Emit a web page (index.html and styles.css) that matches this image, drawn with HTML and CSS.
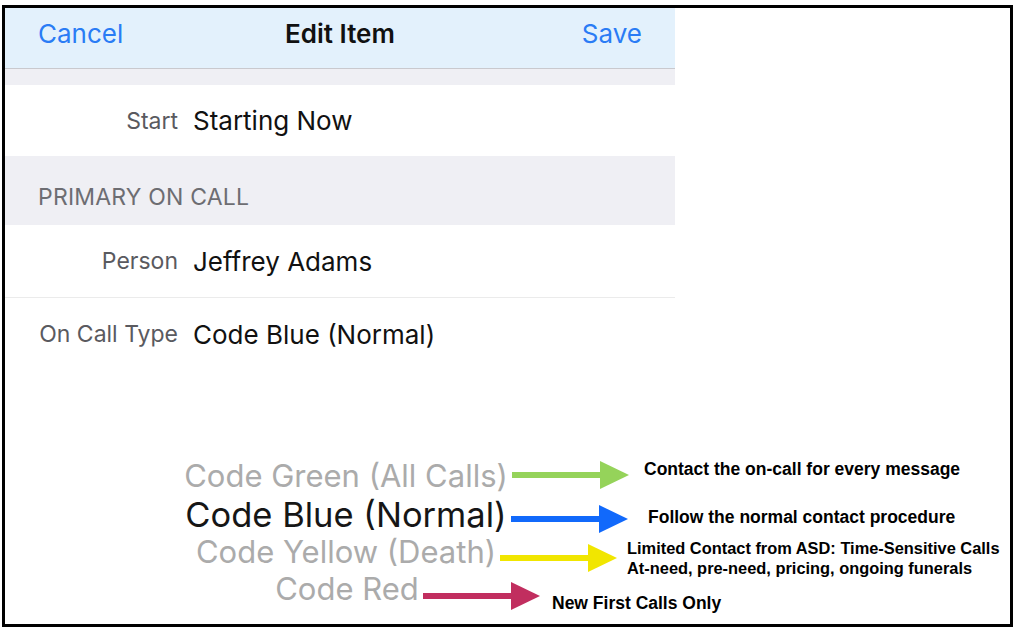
FILE: index.html
```html
<!DOCTYPE html>
<html>
<head>
<meta charset="utf-8">
<link rel="stylesheet" href="styles.css">
</head>
<body>
<div class="frame">
  <div class="phone">
    <div class="nav">
      <span class="nav-btn nav-left">Cancel</span>
      <span class="nav-title">Edit Item</span>
      <span class="nav-btn nav-right">Save</span>
    </div>
    <div class="band"></div>
    <div class="row row-start">
      <span class="label">Start</span>
      <span class="value">Starting Now</span>
    </div>
    <div class="section">PRIMARY ON CALL</div>
    <div class="row row-sep">
      <span class="label">Person</span>
      <span class="value">Jeffrey Adams</span>
    </div>
    <div class="row">
      <span class="label">On Call Type</span>
      <span class="value">Code Blue (Normal)</span>
    </div>
  </div>

  <div class="legend">
    <div class="lrow lrow-green">
      <span class="pick pick-green">Code Green (All Calls)</span>
      <svg class="arrow arrow-green" width="117" height="28" viewBox="0 0 117 28"><rect x="0" y="11" width="90" height="6"/><polygon points="88,0 117,14 88,28"/></svg>
      <span class="desc desc-green">Contact the on-call for every message</span>
    </div>
    <div class="lrow lrow-blue">
      <span class="pick pick-blue">Code Blue (Normal)</span>
      <svg class="arrow arrow-blue" width="117" height="28" viewBox="0 0 117 28"><rect x="0" y="11" width="90" height="6"/><polygon points="88,0 117,14 88,28"/></svg>
      <span class="desc desc-blue">Follow the normal contact procedure</span>
    </div>
    <div class="lrow lrow-yellow">
      <span class="pick pick-yellow">Code Yellow (Death)</span>
      <svg class="arrow arrow-yellow" width="117" height="28" viewBox="0 0 117 28"><rect x="0" y="11" width="90" height="6"/><polygon points="88,0 117,14 88,28"/></svg>
      <span class="desc desc-yellow">Limited Contact from ASD: Time-Sensitive Calls<br>At-need, pre-need, pricing, ongoing funerals</span>
    </div>
    <div class="lrow lrow-red">
      <span class="pick pick-red">Code Red</span>
      <svg class="arrow arrow-red" width="117" height="28" viewBox="0 0 117 28"><rect x="0" y="11" width="90" height="6"/><polygon points="88,0 117,14 88,28"/></svg>
      <span class="desc desc-red">New First Calls Only</span>
    </div>
  </div>
</div>
</body>
</html>
```
FILE: styles.css
```css
html, body {
  margin: 0;
  padding: 0;
  background: #ffffff;
}

body {
  font-family: Inter, "Liberation Sans", sans-serif;
}

.frame {
  box-sizing: border-box;
  margin: 5px 0 0 2px;
  width: 1011px;
  height: 622px;
  border: 3px solid #000;
  background: #fff;
  overflow: hidden;
}

.phone {
  width: 670px;
}

.nav {
  box-sizing: border-box;
  height: 61px;
  background: #e3f1fc;
  border-bottom: 1px solid #c9c9ce;
  display: grid;
  grid-template-columns: 1fr auto 1fr;
  align-items: center;
  padding: 0 33px 9px 33px;
  font-size: 26px;
}

.nav-btn {
  color: #2a7cf5;
}

.nav-right {
  justify-self: end;
}

.nav-title {
  font-weight: 600;
  color: #111;
}

.band {
  height: 16px;
  background: #efeff4;
}

.row {
  height: 72px;
  display: flex;
  align-items: center;
  background: #fff;
}

.row-start {
  height: 71px;
}

.row-sep {
  border-bottom: 1px solid #ebebeb;
}

.label {
  width: 173px;
  text-align: right;
  font-size: 23px;
  color: #5a5a5f;
  flex: none;
}

.value {
  margin-left: 15px;
  font-size: 26px;
  color: #111;
}

.section {
  height: 69px;
  box-sizing: border-box;
  background: #efeff4;
  padding: 27px 0 0 33px;
  font-size: 23px;
  letter-spacing: 0.2px;
  color: #6d6d72;
}

.legend {
  margin-top: 88px;
  display: flex;
  flex-direction: column;
}

.lrow {
  display: flex;
  align-items: center;
  height: 38px;
}

.lrow-red {
  height: 36px;
}

.pick {
  white-space: nowrap;
  display: flex;
  justify-content: center;
  flex: none;
  color: #ababab;
  font-size: 31px;
  margin-bottom: 4px;
}

.pick-green {
  margin-left: 181px;
  width: 320px;
}

.pick-blue {
  margin-left: 181px;
  width: 320px;
  font-size: 34.5px;
  color: #161616;
  margin-bottom: 2px;
}

.pick-yellow {
  margin-left: 193px;
  width: 296px;
}

.pick-red {
  margin-left: 272px;
  width: 140px;
}

.arrow {
  flex: none;
  margin-left: 6px;
}

.arrow-green { fill: #95d35a; margin-top: -5px; }
.arrow-blue { fill: #1169fb; margin-left: 5px; margin-top: 7px; }
.arrow-yellow { fill: #f1e600; margin-top: 10px; }
.arrow-red { fill: #c12e5f; margin-top: 12px; }

.desc {
  font-family: "Liberation Sans", Arial, sans-serif;
  font-weight: bold;
  font-size: 17.5px;
  color: #000;
  white-space: nowrap;
  line-height: 20px;
}

.desc-green { margin-left: 15px; margin-top: -16px; }
.desc-blue { margin-left: 20px; margin-top: 4px; }
.desc-yellow { margin-left: 10px; margin-top: 10px; font-size: 16.4px; }
.desc-red { margin-left: 12px; margin-top: 26px; }
```
